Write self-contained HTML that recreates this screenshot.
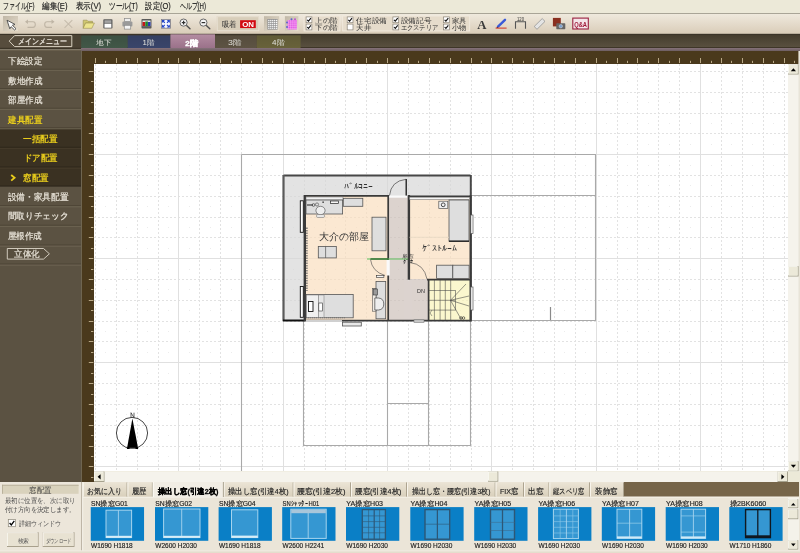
<!DOCTYPE html>
<html><head><meta charset="utf-8">
<style>
html,body{margin:0;padding:0;background:#ece9d8}
body{width:800px;height:553px;overflow:hidden}
svg{display:block;will-change:transform;font-family:"Liberation Sans",sans-serif}
</style></head><body>
<svg width="800" height="553" viewBox="0 0 800 553">
<defs>
<linearGradient id="gTool" x1="0" y1="0" x2="0" y2="1"><stop offset="0" stop-color="#efe9dd"/><stop offset="1" stop-color="#d9ccb8"/></linearGradient>
<linearGradient id="gBand" x1="0" y1="0" x2="0" y2="1"><stop offset="0" stop-color="#463e2f"/><stop offset="1" stop-color="#574d3c"/></linearGradient>
<linearGradient id="gPress" x1="0" y1="0" x2="1" y2="1"><stop offset="0" stop-color="#c0b7a6"/><stop offset="1" stop-color="#e6ddcd"/></linearGradient>
</defs>

<rect x="0" y="0" width="800" height="13" fill="#ece9d8"/><rect x="0" y="13" width="800" height="1" fill="#a9a597"/><text x="2.8" y="9.4" font-size="9.2" fill="#1a1a1a" font-weight="normal" textLength="31.7" lengthAdjust="spacingAndGlyphs" stroke="#1a1a1a" stroke-width="0.15">ファイル(F)</text><text x="42" y="9.4" font-size="9.2" fill="#1a1a1a" font-weight="normal" textLength="25.5" lengthAdjust="spacingAndGlyphs" stroke="#1a1a1a" stroke-width="0.15">編集(E)</text><text x="75.7" y="9.4" font-size="9.2" fill="#1a1a1a" font-weight="normal" textLength="25.5" lengthAdjust="spacingAndGlyphs" stroke="#1a1a1a" stroke-width="0.15">表示(V)</text><text x="109" y="9.4" font-size="9.2" fill="#1a1a1a" font-weight="normal" textLength="28.8" lengthAdjust="spacingAndGlyphs" stroke="#1a1a1a" stroke-width="0.15">ツール(T)</text><text x="145.4" y="9.4" font-size="9.2" fill="#1a1a1a" font-weight="normal" textLength="25.4" lengthAdjust="spacingAndGlyphs" stroke="#1a1a1a" stroke-width="0.15">設定(O)</text><text x="179.8" y="9.4" font-size="9.2" fill="#1a1a1a" font-weight="normal" textLength="26.2" lengthAdjust="spacingAndGlyphs" stroke="#1a1a1a" stroke-width="0.15">ヘルプ(H)</text><rect x="25.5" y="10.6" width="4.6" height="0.8" fill="#333"/><rect x="58.5" y="10.6" width="4.6" height="0.8" fill="#333"/><rect x="92.2" y="10.6" width="4.6" height="0.8" fill="#333"/><rect x="128.8" y="10.6" width="4.6" height="0.8" fill="#333"/><rect x="161.8" y="10.6" width="4.6" height="0.8" fill="#333"/><rect x="197.0" y="10.6" width="4.6" height="0.8" fill="#333"/>
<rect x="0" y="14" width="800" height="20" fill="url(#gTool)"/><rect x="0" y="33" width="800" height="1" fill="#b9ae9c"/><rect x="3" y="16" width="15" height="15" fill="url(#gPress)"/><path d="M7 20.2 L15 24.4 L12.4 25.3 L16 28.7 L14.6 30 L11.1 26.7 L9.8 28.8 Z" fill="#fff" stroke="#4a4a4a" stroke-width="0.9" stroke-linejoin="round"/><path d="M26 21.8 L33 21.8 Q35.3 21.8 35.3 24.6 Q35.3 27.4 33 27.4 L27.5 27.4" fill="none" stroke="#bfb5a5" stroke-width="1.1"/><path d="M25 21.8 L28 19.6 L28 24 Z" fill="#bfb5a5"/><path d="M53.5 21.8 L47 21.8 Q44.7 21.8 44.7 24.6 Q44.7 27.4 47 27.4 L52 27.4" fill="none" stroke="#bfb5a5" stroke-width="1.1"/><path d="M54.5 21.8 L51.5 19.6 L51.5 24 Z" fill="#bfb5a5"/><path d="M64.5 20.2 L72.3 27.8 M72.3 20.2 L64.5 27.8" stroke="#c6bcac" stroke-width="1.1"/><path d="M83.2 20.2 L87 20.2 L88 21.3 L92.5 21.3 L92.5 23 L85.6 23 L83.2 28.2 Z" fill="#cfc770" stroke="#9a9050" stroke-width="0.6"/><path d="M85.6 23 L94.4 23 L91.8 28.3 L83.2 28.3 Z" fill="#ece48e" stroke="#9a9050" stroke-width="0.6"/><rect x="103.3" y="19.3" width="9.2" height="9.2" rx="0.8" fill="#5e5e5e"/><rect x="104.5" y="20.3" width="6.8" height="2.6" fill="#a4a4a4"/><rect x="104.5" y="23.7" width="6.8" height="4" fill="#fff"/><rect x="124.5" y="18.6" width="6" height="3" fill="#eee" stroke="#8a8a8a" stroke-width="0.7"/><rect x="122.4" y="21.6" width="10" height="5" rx="1" fill="#9a9a9a"/><rect x="124.3" y="25.3" width="6.4" height="3.8" fill="#f4f4f4" stroke="#8a8a8a" stroke-width="0.7"/><rect x="141.5" y="19" width="10" height="9.6" rx="0.8" fill="#5a5a5a"/><rect x="142.5" y="20.5" width="8" height="5.6" fill="#e8e8e8"/><rect x="142.5" y="22" width="2.8" height="4" fill="#c01818"/><rect x="145.3" y="21.5" width="2.6" height="4.6" fill="#1a8a2a"/><rect x="147.9" y="22" width="2.6" height="4" fill="#2a3ab0"/><rect x="161" y="19" width="9.8" height="9.6" fill="#7c7c88"/><rect x="161.8" y="19.8" width="8.2" height="8" fill="#f4f6ff"/><path d="M162 20 L165 20 L162 23 Z M169.8 20 L166.8 20 L169.8 23 Z M162 27.6 L165 27.6 L162 24.6 Z M169.8 27.6 L166.8 27.6 L169.8 24.6 Z" fill="#2446c8"/><path d="M162.5 20.5 L164.8 22.8 M169.3 20.5 L167 22.8 M162.5 27.1 L164.8 24.8 M169.3 27.1 L167 24.8" stroke="#2446c8" stroke-width="1.2"/><path d="M186.0 25 L190.0 28.8" stroke="#505050" stroke-width="1.4" stroke-linecap="round"/><circle cx="183.6" cy="22.6" r="3.6" fill="#f4f4f4" stroke="#6a6a6a" stroke-width="1"/><path d="M181.79999999999998 22.6 L185.4 22.6" stroke="#303030" stroke-width="1.2"/><path d="M183.6 20.8 L183.6 24.4" stroke="#303030" stroke-width="1.2"/><path d="M205.8 25 L209.8 28.8" stroke="#505050" stroke-width="1.4" stroke-linecap="round"/><circle cx="203.4" cy="22.6" r="3.6" fill="#f4f4f4" stroke="#6a6a6a" stroke-width="1"/><path d="M201.6 22.6 L205.20000000000002 22.6" stroke="#303030" stroke-width="1.2"/><rect x="216.8" y="16.2" width="42.2" height="14.7" fill="#d8ceba"/><rect x="217.3" y="16.7" width="41.5" height="14" fill="none" stroke="#e8e0d2" stroke-width="1"/><text x="222" y="27" font-size="7.5" fill="#333" font-weight="normal" textLength="14.8" lengthAdjust="spacingAndGlyphs" >吸着</text><rect x="240.1" y="20.2" width="15.7" height="7.9" fill="#d20a12"/><text x="242.2" y="26.9" font-size="8" fill="#fff" font-weight="bold" textLength="11.8" lengthAdjust="spacingAndGlyphs" >ON</text><rect x="264" y="16.2" width="15.2" height="14.7" fill="url(#gPress)"/><rect x="267.4" y="19" width="10.2" height="10.6" fill="#8e8e8e"/><rect x="268.20" y="19.80" width="1.3" height="1.3" fill="#fafafa"/><rect x="268.20" y="21.75" width="1.3" height="1.3" fill="#fafafa"/><rect x="268.20" y="23.70" width="1.3" height="1.3" fill="#fafafa"/><rect x="268.20" y="25.65" width="1.3" height="1.3" fill="#fafafa"/><rect x="268.20" y="27.60" width="1.3" height="1.3" fill="#fafafa"/><rect x="270.15" y="19.80" width="1.3" height="1.3" fill="#fafafa"/><rect x="270.15" y="21.75" width="1.3" height="1.3" fill="#fafafa"/><rect x="270.15" y="23.70" width="1.3" height="1.3" fill="#fafafa"/><rect x="270.15" y="25.65" width="1.3" height="1.3" fill="#fafafa"/><rect x="270.15" y="27.60" width="1.3" height="1.3" fill="#fafafa"/><rect x="272.10" y="19.80" width="1.3" height="1.3" fill="#fafafa"/><rect x="272.10" y="21.75" width="1.3" height="1.3" fill="#fafafa"/><rect x="272.10" y="23.70" width="1.3" height="1.3" fill="#fafafa"/><rect x="272.10" y="25.65" width="1.3" height="1.3" fill="#fafafa"/><rect x="272.10" y="27.60" width="1.3" height="1.3" fill="#fafafa"/><rect x="274.05" y="19.80" width="1.3" height="1.3" fill="#fafafa"/><rect x="274.05" y="21.75" width="1.3" height="1.3" fill="#fafafa"/><rect x="274.05" y="23.70" width="1.3" height="1.3" fill="#fafafa"/><rect x="274.05" y="25.65" width="1.3" height="1.3" fill="#fafafa"/><rect x="274.05" y="27.60" width="1.3" height="1.3" fill="#fafafa"/><rect x="276.00" y="19.80" width="1.3" height="1.3" fill="#fafafa"/><rect x="276.00" y="21.75" width="1.3" height="1.3" fill="#fafafa"/><rect x="276.00" y="23.70" width="1.3" height="1.3" fill="#fafafa"/><rect x="276.00" y="25.65" width="1.3" height="1.3" fill="#fafafa"/><rect x="276.00" y="27.60" width="1.3" height="1.3" fill="#fafafa"/><rect x="284.9" y="16.2" width="13.5" height="14.7" fill="url(#gPress)"/><rect x="287.6" y="20" width="9.2" height="9.4" fill="#e040e0"/><path d="M288.4 20 L288.4 29.4 M287.6 21.0 L296.8 21.0" stroke="#f8c8f8" stroke-width="0.5"/><path d="M290.29999999999995 20 L290.29999999999995 29.4 M287.6 22.9 L296.8 22.9" stroke="#f8c8f8" stroke-width="0.5"/><path d="M292.2 20 L292.2 29.4 M287.6 24.8 L296.8 24.8" stroke="#f8c8f8" stroke-width="0.5"/><path d="M294.09999999999997 20 L294.09999999999997 29.4 M287.6 26.7 L296.8 26.7" stroke="#f8c8f8" stroke-width="0.5"/><path d="M296.0 20 L296.0 29.4 M287.6 28.6 L296.8 28.6" stroke="#f8c8f8" stroke-width="0.5"/><circle cx="287" cy="22.5" r="1" fill="#6060d0"/><circle cx="287" cy="27" r="1" fill="#6060d0"/><circle cx="291.5" cy="19.2" r="1" fill="#6060d0"/><circle cx="295" cy="19.2" r="1" fill="#c050d0"/><rect x="304" y="16" width="36" height="15" fill="#e6dccb" stroke="#f2ece0" stroke-width="0.8"/><rect x="342.7" y="16" width="127" height="15" fill="#e6dccb" stroke="#f2ece0" stroke-width="0.8"/><rect x="306.1" y="16.9" width="5.8" height="5.8" fill="#fff" stroke="#8a8478" stroke-width="0.7"/><path d="M307.20000000000005 19.799999999999997 L308.5 21.2 L310.90000000000003 18.2" fill="none" stroke="#111" stroke-width="1.1"/><rect x="306.1" y="24.1" width="5.8" height="5.8" fill="#fff" stroke="#8a8478" stroke-width="0.7"/><path d="M307.20000000000005 27.0 L308.5 28.400000000000002 L310.90000000000003 25.400000000000002" fill="none" stroke="#111" stroke-width="1.1"/><text x="315.2" y="22.8" font-size="7.3" fill="#333" font-weight="normal" textLength="22.4" lengthAdjust="spacingAndGlyphs" >上の階</text><text x="315.2" y="30" font-size="7.3" fill="#333" font-weight="normal" textLength="22.4" lengthAdjust="spacingAndGlyphs" >下の階</text><rect x="347.2" y="16.9" width="5.8" height="5.8" fill="#fff" stroke="#8a8478" stroke-width="0.7"/><path d="M348.3 19.799999999999997 L349.59999999999997 21.2 L352.0 18.2" fill="none" stroke="#111" stroke-width="1.1"/><rect x="347.2" y="24.1" width="5.8" height="5.8" fill="#fff" stroke="#8a8478" stroke-width="0.7"/><text x="356.2" y="22.8" font-size="7.3" fill="#333" font-weight="normal" textLength="30.8" lengthAdjust="spacingAndGlyphs" >住宅設備</text><text x="356.2" y="30" font-size="7.3" fill="#333" font-weight="normal" textLength="15.0" lengthAdjust="spacingAndGlyphs" >天井</text><rect x="392.9" y="16.9" width="5.8" height="5.8" fill="#fff" stroke="#8a8478" stroke-width="0.7"/><path d="M394.0 19.799999999999997 L395.29999999999995 21.2 L397.7 18.2" fill="none" stroke="#111" stroke-width="1.1"/><rect x="392.9" y="24.1" width="5.8" height="5.8" fill="#fff" stroke="#8a8478" stroke-width="0.7"/><path d="M394.0 27.0 L395.29999999999995 28.400000000000002 L397.7 25.400000000000002" fill="none" stroke="#111" stroke-width="1.1"/><text x="400.7" y="22.8" font-size="7.3" fill="#333" font-weight="normal" textLength="30.8" lengthAdjust="spacingAndGlyphs" >設備記号</text><text x="400.7" y="30" font-size="7.3" fill="#333" font-weight="normal" textLength="37.6" lengthAdjust="spacingAndGlyphs" >エクステリア</text><rect x="443.5" y="16.9" width="5.8" height="5.8" fill="#fff" stroke="#8a8478" stroke-width="0.7"/><path d="M444.6 19.799999999999997 L445.9 21.2 L448.3 18.2" fill="none" stroke="#111" stroke-width="1.1"/><rect x="443.5" y="24.1" width="5.8" height="5.8" fill="#fff" stroke="#8a8478" stroke-width="0.7"/><path d="M444.6 27.0 L445.9 28.400000000000002 L448.3 25.400000000000002" fill="none" stroke="#111" stroke-width="1.1"/><text x="451.9" y="22.8" font-size="7.3" fill="#333" font-weight="normal" textLength="14.5" lengthAdjust="spacingAndGlyphs" >家具</text><text x="451.9" y="30" font-size="7.3" fill="#333" font-weight="normal" textLength="14.5" lengthAdjust="spacingAndGlyphs" >小物</text><text x="477.2" y="29.2" font-family="Liberation Serif" font-size="13" font-weight="bold" fill="#3a3a3a" textLength="9.2" lengthAdjust="spacingAndGlyphs">A</text><path d="M505 19.8 L498 26.6" stroke="#3a5ad8" stroke-width="2.4" stroke-linecap="round"/><path d="M497.8 26.9 L496.8 28" stroke="#222" stroke-width="1"/><path d="M495.6 28.1 L506.6 28.1" stroke="#d03020" stroke-width="1"/><path d="M515.5 28.8 L515.5 21.8 L525.5 21.8 L525.5 28.8" fill="none" stroke="#555" stroke-width="1.1"/><text x="517" y="21" font-size="4.5" fill="#333" textLength="7" lengthAdjust="spacingAndGlyphs">120</text><path d="M534.2 26.5 L542.2 18.6 L545 21.4 L537 29.3 Z" fill="#e4e4e4" stroke="#8a8a8a" stroke-width="0.7"/><rect x="552.9" y="17.9" width="7.9" height="8.5" fill="#8a3020"/><rect x="556.3" y="23.3" width="9" height="5.9" rx="0.6" fill="#666"/><circle cx="560.8" cy="26.2" r="1.7" fill="#7aa0d0" stroke="#ddd" stroke-width="0.5"/><rect x="572.8" y="18.1" width="15.5" height="10.9" fill="#f4e4e8" stroke="#9a2040" stroke-width="1.1"/><text x="574.2" y="27.2" font-size="8" fill="#a01838" font-weight="bold" textLength="12.8" lengthAdjust="spacingAndGlyphs" >Q&amp;A</text>
<defs><linearGradient id="gB2" x1="0" y1="0" x2="0" y2="1"><stop offset="0" stop-color="#433b2c"/><stop offset="1" stop-color="#5b5241"/></linearGradient></defs><rect x="0" y="34" width="800" height="14.5" fill="url(#gB2)"/><rect x="0" y="34" width="800" height="1" fill="#3b3428"/><rect x="0" y="35" width="72" height="13" fill="#574d3d"/><rect x="72" y="35" width="9" height="13" fill="#4b4334"/><rect x="81" y="47" width="719" height="1.2" fill="#3e3628"/><path d="M14.6 35.6 L71.8 35.6 L71.8 46.6 L14.6 46.6 L9.2 41.1 Z" fill="#544a3a" stroke="#d8d0c0" stroke-width="1"/><text x="18" y="44.1" font-size="7.8" fill="#ebe6dc" font-weight="normal" textLength="49.0" lengthAdjust="spacingAndGlyphs" stroke="#ebe6dc" stroke-width="0.25">メインメニュー</text><defs><linearGradient id="gTg" x1="0" y1="0" x2="0" y2="1"><stop offset="0" stop-color="#000" stop-opacity="0.08"/><stop offset="1" stop-color="#000" stop-opacity="0"/></linearGradient></defs><rect x="81.2" y="35.4" width="46.5" height="12.6" fill="#415747"/><rect x="81.2" y="35.4" width="46.5" height="12.6" fill="url(#gTg)"/><text x="96.2" y="45.3" font-size="7.4" fill="#e2e2dc" font-weight="normal" textLength="15.2" lengthAdjust="spacingAndGlyphs" >地下</text><rect x="127.7" y="35.4" width="42.7" height="12.6" fill="#39456a"/><rect x="127.7" y="35.4" width="42.7" height="12.6" fill="url(#gTg)"/><text x="142.4" y="45.3" font-size="7.4" fill="#e2e2dc" font-weight="normal" textLength="11.8" lengthAdjust="spacingAndGlyphs" >1階</text><rect x="215" y="35.4" width="41.80000000000001" height="12.6" fill="#5d5343"/><rect x="215" y="35.4" width="41.80000000000001" height="12.6" fill="url(#gTg)"/><text x="228" y="45.3" font-size="7.4" fill="#e2e2dc" font-weight="normal" textLength="13.4" lengthAdjust="spacingAndGlyphs" >3階</text><rect x="256.8" y="35.4" width="43.80000000000001" height="12.6" fill="#68623a"/><rect x="256.8" y="35.4" width="43.80000000000001" height="12.6" fill="url(#gTg)"/><text x="272" y="45.3" font-size="7.4" fill="#e2e2dc" font-weight="normal" textLength="12.2" lengthAdjust="spacingAndGlyphs" >4階</text><defs><linearGradient id="gT2" x1="0" y1="0" x2="0" y2="1"><stop offset="0" stop-color="#b48ca2"/><stop offset="1" stop-color="#9a7189"/></linearGradient></defs><rect x="170.4" y="34.3" width="44.6" height="14" fill="url(#gT2)"/><text x="185.2" y="45.5" font-size="7.8" fill="#ffffff" font-weight="bold" textLength="12.8" lengthAdjust="spacingAndGlyphs" stroke="#fff" stroke-width="0.35">2階</text><rect x="0" y="47.8" width="81" height="1.6" fill="#3d3628"/><rect x="0" y="49.4" width="81" height="1.6" fill="#685e4c"/><defs><linearGradient id="gSt" x1="0" y1="0" x2="0" y2="1"><stop offset="0" stop-color="#85727a"/><stop offset="1" stop-color="#6e5e62"/></linearGradient></defs><rect x="81" y="48" width="719" height="3" fill="url(#gSt)"/>
<rect x="0" y="51" width="81" height="431" fill="#5b5242"/><rect x="0" y="128.5" width="81" height="57.5" fill="#3a3122"/><rect x="0" y="68.8" width="81" height="1" fill="#4a4234"/><rect x="0" y="69.8" width="81" height="1" fill="#6e6553"/><rect x="0" y="88.2" width="81" height="1" fill="#4a4234"/><rect x="0" y="89.2" width="81" height="1" fill="#6e6553"/><rect x="0" y="107.8" width="81" height="1" fill="#4a4234"/><rect x="0" y="108.8" width="81" height="1" fill="#6e6553"/><rect x="0" y="127.3" width="81" height="1" fill="#4a4234"/><rect x="0" y="128.3" width="81" height="1" fill="#6e6553"/><rect x="0" y="146.8" width="81" height="1" fill="#2c2519"/><rect x="0" y="147.8" width="81" height="1" fill="#463c2c"/><rect x="0" y="166.6" width="81" height="1" fill="#2c2519"/><rect x="0" y="167.6" width="81" height="1" fill="#463c2c"/><rect x="0" y="185.6" width="81" height="1" fill="#2c2519"/><rect x="0" y="205.3" width="81" height="1" fill="#4a4234"/><rect x="0" y="206.3" width="81" height="1" fill="#6e6553"/><rect x="0" y="224.8" width="81" height="1" fill="#4a4234"/><rect x="0" y="225.8" width="81" height="1" fill="#6e6553"/><rect x="0" y="244.6" width="81" height="1" fill="#4a4234"/><rect x="0" y="245.6" width="81" height="1" fill="#6e6553"/><rect x="0" y="263.6" width="81" height="1" fill="#4a4234"/><rect x="0" y="264.6" width="81" height="1" fill="#6e6553"/><text x="8" y="64.1" font-size="8.6" fill="#e8e3d8" font-weight="normal" textLength="34.0" lengthAdjust="spacingAndGlyphs" stroke="#e8e3d8" stroke-width="0.2">下絵設定</text><text x="8" y="83.9" font-size="8.6" fill="#e8e3d8" font-weight="normal" textLength="34.0" lengthAdjust="spacingAndGlyphs" stroke="#e8e3d8" stroke-width="0.2">敷地作成</text><text x="8" y="103.2" font-size="8.6" fill="#e8e3d8" font-weight="normal" textLength="34.0" lengthAdjust="spacingAndGlyphs" stroke="#e8e3d8" stroke-width="0.2">部屋作成</text><text x="8" y="122.6" font-size="8.6" fill="#e8cc1c" font-weight="bold" textLength="34.0" lengthAdjust="spacingAndGlyphs" >建具配置</text><text x="23" y="141.9" font-size="8.6" fill="#e8cc1c" font-weight="bold" textLength="34.5" lengthAdjust="spacingAndGlyphs" >一括配置</text><text x="24" y="161.2" font-size="8.6" fill="#e8cc1c" font-weight="bold" textLength="33.5" lengthAdjust="spacingAndGlyphs" >ドア配置</text><path d="M11.2 175 L14.6 177.8 L11.2 180.6" fill="none" stroke="#e8cc1c" stroke-width="1.8"/><text x="23" y="181.0" font-size="8.6" fill="#e8cc1c" font-weight="bold" textLength="25.5" lengthAdjust="spacingAndGlyphs" >窓配置</text><text x="7.7" y="199.7" font-size="8.6" fill="#e8e3d8" font-weight="normal" textLength="60.8" lengthAdjust="spacingAndGlyphs" stroke="#e8e3d8" stroke-width="0.2">設備・家具配置</text><text x="7.7" y="219.0" font-size="8.6" fill="#e8e3d8" font-weight="normal" textLength="60.8" lengthAdjust="spacingAndGlyphs" stroke="#e8e3d8" stroke-width="0.2">間取りチェック</text><text x="7.7" y="239.0" font-size="8.6" fill="#e8e3d8" font-weight="normal" textLength="34.3" lengthAdjust="spacingAndGlyphs" stroke="#e8e3d8" stroke-width="0.2">屋根作成</text><path d="M7.3 248.5 L43.5 248.5 L49.4 253.8 L43.5 259.1 L7.3 259.1 Z" fill="#574e3e" stroke="#ddd6c8" stroke-width="0.9"/><text x="14" y="257.0" font-size="8.6" fill="#e8e3d8" font-weight="normal" textLength="25.6" lengthAdjust="spacingAndGlyphs" stroke="#e8e3d8" stroke-width="0.2">立体化</text>
<rect x="81" y="51" width="719" height="13" fill="#4a391c"/><rect x="81" y="51" width="13" height="431" fill="#4a391c"/><rect x="81" y="51" width="1" height="431" fill="#6f6550"/><rect x="798" y="51" width="2" height="13" fill="#6b5a40"/><path d="M95.5 58 L95.5 63 M105.5 60.8 L105.5 63 M116.5 58 L116.5 63 M126.5 60.8 L126.5 63 M137.5 58 L137.5 63 M147.5 60.8 L147.5 63 M158.5 58 L158.5 63 M168.5 60.8 L168.5 63 M178.5 58 L178.5 63 M189.5 60.8 L189.5 63 M199.5 58 L199.5 63 M210.5 60.8 L210.5 63 M220.5 58 L220.5 63 M231.5 60.8 L231.5 63 M241.5 58 L241.5 63 M251.5 60.8 L251.5 63 M262.5 58 L262.5 63 M272.5 60.8 L272.5 63 M283.5 58 L283.5 63 M293.5 60.8 L293.5 63 M304.5 58 L304.5 63 M314.5 60.8 L314.5 63 M325.5 58 L325.5 63 M335.5 60.8 L335.5 63 M345.5 58 L345.5 63 M356.5 60.8 L356.5 63 M366.5 58 L366.5 63 M377.5 60.8 L377.5 63 M387.5 58 L387.5 63 M398.5 60.8 L398.5 63 M408.5 58 L408.5 63 M418.5 60.8 L418.5 63 M429.5 58 L429.5 63 M439.5 60.8 L439.5 63 M450.5 58 L450.5 63 M460.5 60.8 L460.5 63 M471.5 58 L471.5 63 M481.5 60.8 L481.5 63 M491.5 58 L491.5 63 M502.5 60.8 L502.5 63 M512.5 58 L512.5 63 M523.5 60.8 L523.5 63 M533.5 58 L533.5 63 M544.5 60.8 L544.5 63 M554.5 58 L554.5 63 M564.5 60.8 L564.5 63 M575.5 58 L575.5 63 M585.5 60.8 L585.5 63 M596.5 58 L596.5 63 M606.5 60.8 L606.5 63 M617.5 58 L617.5 63 M627.5 60.8 L627.5 63 M637.5 58 L637.5 63 M648.5 60.8 L648.5 63 M658.5 58 L658.5 63 M669.5 60.8 L669.5 63 M679.5 58 L679.5 63 M690.5 60.8 L690.5 63 M700.5 58 L700.5 63 M711.5 60.8 L711.5 63 M721.5 58 L721.5 63 M731.5 60.8 L731.5 63 M742.5 58 L742.5 63 M752.5 60.8 L752.5 63 M763.5 58 L763.5 63 M773.5 60.8 L773.5 63 M784.5 58 L784.5 63 M794.5 60.8 L794.5 63 M88.8 71.5 L93.4 71.5 M91 81.5 L93.4 81.5 M88.8 92.5 L93.4 92.5 M91 102.5 L93.4 102.5 M88.8 113.5 L93.4 113.5 M91 123.5 L93.4 123.5 M88.8 133.5 L93.4 133.5 M91 144.5 L93.4 144.5 M88.8 154.5 L93.4 154.5 M91 165.5 L93.4 165.5 M88.8 175.5 L93.4 175.5 M91 185.5 L93.4 185.5 M88.8 196.5 L93.4 196.5 M91 206.5 L93.4 206.5 M88.8 217.5 L93.4 217.5 M91 227.5 L93.4 227.5 M88.8 237.5 L93.4 237.5 M91 248.5 L93.4 248.5 M88.8 258.5 L93.4 258.5 M91 269.5 L93.4 269.5 M88.8 279.5 L93.4 279.5 M91 289.5 L93.4 289.5 M88.8 300.5 L93.4 300.5 M91 310.5 L93.4 310.5 M88.8 321.5 L93.4 321.5 M91 331.5 L93.4 331.5 M88.8 341.5 L93.4 341.5 M91 352.5 L93.4 352.5 M88.8 362.5 L93.4 362.5 M91 373.5 L93.4 373.5 M88.8 383.5 L93.4 383.5 M91 394.5 L93.4 394.5 M88.8 404.5 L93.4 404.5 M91 414.5 L93.4 414.5 M88.8 425.5 L93.4 425.5 M91 435.5 L93.4 435.5 M88.8 446.5 L93.4 446.5 M91 456.5 L93.4 456.5 M88.8 466.5 L93.4 466.5 M91 477.5 L93.4 477.5 " stroke="#b9a886" stroke-width="1"/>
<rect x="94" y="64" width="694" height="407" fill="#ffffff"/><svg x="94" y="64" width="694" height="407" viewBox="94 64 694 407"><path d="M95.5 64 L95.5 471 M116.5 64 L116.5 471 M137.5 64 L137.5 471 M158.5 64 L158.5 471 M199.5 64 L199.5 471 M220.5 64 L220.5 471 M241.5 64 L241.5 471 M262.5 64 L262.5 471 M304.5 64 L304.5 471 M325.5 64 L325.5 471 M345.5 64 L345.5 471 M366.5 64 L366.5 471 M408.5 64 L408.5 471 M429.5 64 L429.5 471 M450.5 64 L450.5 471 M471.5 64 L471.5 471 M512.5 64 L512.5 471 M533.5 64 L533.5 471 M554.5 64 L554.5 471 M575.5 64 L575.5 471 M617.5 64 L617.5 471 M637.5 64 L637.5 471 M658.5 64 L658.5 471 M679.5 64 L679.5 471 M721.5 64 L721.5 471 M742.5 64 L742.5 471 M763.5 64 L763.5 471 M784.5 64 L784.5 471 M94 71.5 L788 71.5 M94 92.5 L788 92.5 M94 113.5 L788 113.5 M94 133.5 L788 133.5 M94 175.5 L788 175.5 M94 196.5 L788 196.5 M94 217.5 L788 217.5 M94 237.5 L788 237.5 M94 279.5 L788 279.5 M94 300.5 L788 300.5 M94 321.5 L788 321.5 M94 341.5 L788 341.5 M94 383.5 L788 383.5 M94 404.5 L788 404.5 M94 425.5 L788 425.5 M94 446.5 L788 446.5 " stroke="#e2e2e2" stroke-width="1" stroke-dasharray="2 2" fill="none"/><path d="M178.5 64 L178.5 471 M283.5 64 L283.5 471 M387.5 64 L387.5 471 M491.5 64 L491.5 471 M596.5 64 L596.5 471 M700.5 64 L700.5 471 M94 154.5 L788 154.5 M94 258.5 L788 258.5 M94 362.5 L788 362.5 M94 466.5 L788 466.5 " stroke="#e0e0e0" stroke-width="1" fill="none"/><path d="M105 81h1v1h-1zM105 102h1v1h-1zM105 123h1v1h-1zM105 144h1v1h-1zM105 165h1v1h-1zM105 185h1v1h-1zM105 206h1v1h-1zM105 227h1v1h-1zM105 248h1v1h-1zM105 269h1v1h-1zM105 289h1v1h-1zM105 310h1v1h-1zM105 331h1v1h-1zM105 352h1v1h-1zM105 373h1v1h-1zM105 394h1v1h-1zM105 414h1v1h-1zM105 435h1v1h-1zM105 456h1v1h-1zM126 81h1v1h-1zM126 102h1v1h-1zM126 123h1v1h-1zM126 144h1v1h-1zM126 165h1v1h-1zM126 185h1v1h-1zM126 206h1v1h-1zM126 227h1v1h-1zM126 248h1v1h-1zM126 269h1v1h-1zM126 289h1v1h-1zM126 310h1v1h-1zM126 331h1v1h-1zM126 352h1v1h-1zM126 373h1v1h-1zM126 394h1v1h-1zM126 414h1v1h-1zM126 435h1v1h-1zM126 456h1v1h-1zM147 81h1v1h-1zM147 102h1v1h-1zM147 123h1v1h-1zM147 144h1v1h-1zM147 165h1v1h-1zM147 185h1v1h-1zM147 206h1v1h-1zM147 227h1v1h-1zM147 248h1v1h-1zM147 269h1v1h-1zM147 289h1v1h-1zM147 310h1v1h-1zM147 331h1v1h-1zM147 352h1v1h-1zM147 373h1v1h-1zM147 394h1v1h-1zM147 414h1v1h-1zM147 435h1v1h-1zM147 456h1v1h-1zM168 81h1v1h-1zM168 102h1v1h-1zM168 123h1v1h-1zM168 144h1v1h-1zM168 165h1v1h-1zM168 185h1v1h-1zM168 206h1v1h-1zM168 227h1v1h-1zM168 248h1v1h-1zM168 269h1v1h-1zM168 289h1v1h-1zM168 310h1v1h-1zM168 331h1v1h-1zM168 352h1v1h-1zM168 373h1v1h-1zM168 394h1v1h-1zM168 414h1v1h-1zM168 435h1v1h-1zM168 456h1v1h-1zM189 81h1v1h-1zM189 102h1v1h-1zM189 123h1v1h-1zM189 144h1v1h-1zM189 165h1v1h-1zM189 185h1v1h-1zM189 206h1v1h-1zM189 227h1v1h-1zM189 248h1v1h-1zM189 269h1v1h-1zM189 289h1v1h-1zM189 310h1v1h-1zM189 331h1v1h-1zM189 352h1v1h-1zM189 373h1v1h-1zM189 394h1v1h-1zM189 414h1v1h-1zM189 435h1v1h-1zM189 456h1v1h-1zM210 81h1v1h-1zM210 102h1v1h-1zM210 123h1v1h-1zM210 144h1v1h-1zM210 165h1v1h-1zM210 185h1v1h-1zM210 206h1v1h-1zM210 227h1v1h-1zM210 248h1v1h-1zM210 269h1v1h-1zM210 289h1v1h-1zM210 310h1v1h-1zM210 331h1v1h-1zM210 352h1v1h-1zM210 373h1v1h-1zM210 394h1v1h-1zM210 414h1v1h-1zM210 435h1v1h-1zM210 456h1v1h-1zM231 81h1v1h-1zM231 102h1v1h-1zM231 123h1v1h-1zM231 144h1v1h-1zM231 165h1v1h-1zM231 185h1v1h-1zM231 206h1v1h-1zM231 227h1v1h-1zM231 248h1v1h-1zM231 269h1v1h-1zM231 289h1v1h-1zM231 310h1v1h-1zM231 331h1v1h-1zM231 352h1v1h-1zM231 373h1v1h-1zM231 394h1v1h-1zM231 414h1v1h-1zM231 435h1v1h-1zM231 456h1v1h-1zM251 81h1v1h-1zM251 102h1v1h-1zM251 123h1v1h-1zM251 144h1v1h-1zM251 165h1v1h-1zM251 185h1v1h-1zM251 206h1v1h-1zM251 227h1v1h-1zM251 248h1v1h-1zM251 269h1v1h-1zM251 289h1v1h-1zM251 310h1v1h-1zM251 331h1v1h-1zM251 352h1v1h-1zM251 373h1v1h-1zM251 394h1v1h-1zM251 414h1v1h-1zM251 435h1v1h-1zM251 456h1v1h-1zM272 81h1v1h-1zM272 102h1v1h-1zM272 123h1v1h-1zM272 144h1v1h-1zM272 165h1v1h-1zM272 185h1v1h-1zM272 206h1v1h-1zM272 227h1v1h-1zM272 248h1v1h-1zM272 269h1v1h-1zM272 289h1v1h-1zM272 310h1v1h-1zM272 331h1v1h-1zM272 352h1v1h-1zM272 373h1v1h-1zM272 394h1v1h-1zM272 414h1v1h-1zM272 435h1v1h-1zM272 456h1v1h-1zM293 81h1v1h-1zM293 102h1v1h-1zM293 123h1v1h-1zM293 144h1v1h-1zM293 165h1v1h-1zM293 185h1v1h-1zM293 206h1v1h-1zM293 227h1v1h-1zM293 248h1v1h-1zM293 269h1v1h-1zM293 289h1v1h-1zM293 310h1v1h-1zM293 331h1v1h-1zM293 352h1v1h-1zM293 373h1v1h-1zM293 394h1v1h-1zM293 414h1v1h-1zM293 435h1v1h-1zM293 456h1v1h-1zM314 81h1v1h-1zM314 102h1v1h-1zM314 123h1v1h-1zM314 144h1v1h-1zM314 165h1v1h-1zM314 185h1v1h-1zM314 206h1v1h-1zM314 227h1v1h-1zM314 248h1v1h-1zM314 269h1v1h-1zM314 289h1v1h-1zM314 310h1v1h-1zM314 331h1v1h-1zM314 352h1v1h-1zM314 373h1v1h-1zM314 394h1v1h-1zM314 414h1v1h-1zM314 435h1v1h-1zM314 456h1v1h-1zM335 81h1v1h-1zM335 102h1v1h-1zM335 123h1v1h-1zM335 144h1v1h-1zM335 165h1v1h-1zM335 185h1v1h-1zM335 206h1v1h-1zM335 227h1v1h-1zM335 248h1v1h-1zM335 269h1v1h-1zM335 289h1v1h-1zM335 310h1v1h-1zM335 331h1v1h-1zM335 352h1v1h-1zM335 373h1v1h-1zM335 394h1v1h-1zM335 414h1v1h-1zM335 435h1v1h-1zM335 456h1v1h-1zM356 81h1v1h-1zM356 102h1v1h-1zM356 123h1v1h-1zM356 144h1v1h-1zM356 165h1v1h-1zM356 185h1v1h-1zM356 206h1v1h-1zM356 227h1v1h-1zM356 248h1v1h-1zM356 269h1v1h-1zM356 289h1v1h-1zM356 310h1v1h-1zM356 331h1v1h-1zM356 352h1v1h-1zM356 373h1v1h-1zM356 394h1v1h-1zM356 414h1v1h-1zM356 435h1v1h-1zM356 456h1v1h-1zM377 81h1v1h-1zM377 102h1v1h-1zM377 123h1v1h-1zM377 144h1v1h-1zM377 165h1v1h-1zM377 185h1v1h-1zM377 206h1v1h-1zM377 227h1v1h-1zM377 248h1v1h-1zM377 269h1v1h-1zM377 289h1v1h-1zM377 310h1v1h-1zM377 331h1v1h-1zM377 352h1v1h-1zM377 373h1v1h-1zM377 394h1v1h-1zM377 414h1v1h-1zM377 435h1v1h-1zM377 456h1v1h-1zM398 81h1v1h-1zM398 102h1v1h-1zM398 123h1v1h-1zM398 144h1v1h-1zM398 165h1v1h-1zM398 185h1v1h-1zM398 206h1v1h-1zM398 227h1v1h-1zM398 248h1v1h-1zM398 269h1v1h-1zM398 289h1v1h-1zM398 310h1v1h-1zM398 331h1v1h-1zM398 352h1v1h-1zM398 373h1v1h-1zM398 394h1v1h-1zM398 414h1v1h-1zM398 435h1v1h-1zM398 456h1v1h-1zM418 81h1v1h-1zM418 102h1v1h-1zM418 123h1v1h-1zM418 144h1v1h-1zM418 165h1v1h-1zM418 185h1v1h-1zM418 206h1v1h-1zM418 227h1v1h-1zM418 248h1v1h-1zM418 269h1v1h-1zM418 289h1v1h-1zM418 310h1v1h-1zM418 331h1v1h-1zM418 352h1v1h-1zM418 373h1v1h-1zM418 394h1v1h-1zM418 414h1v1h-1zM418 435h1v1h-1zM418 456h1v1h-1zM439 81h1v1h-1zM439 102h1v1h-1zM439 123h1v1h-1zM439 144h1v1h-1zM439 165h1v1h-1zM439 185h1v1h-1zM439 206h1v1h-1zM439 227h1v1h-1zM439 248h1v1h-1zM439 269h1v1h-1zM439 289h1v1h-1zM439 310h1v1h-1zM439 331h1v1h-1zM439 352h1v1h-1zM439 373h1v1h-1zM439 394h1v1h-1zM439 414h1v1h-1zM439 435h1v1h-1zM439 456h1v1h-1zM460 81h1v1h-1zM460 102h1v1h-1zM460 123h1v1h-1zM460 144h1v1h-1zM460 165h1v1h-1zM460 185h1v1h-1zM460 206h1v1h-1zM460 227h1v1h-1zM460 248h1v1h-1zM460 269h1v1h-1zM460 289h1v1h-1zM460 310h1v1h-1zM460 331h1v1h-1zM460 352h1v1h-1zM460 373h1v1h-1zM460 394h1v1h-1zM460 414h1v1h-1zM460 435h1v1h-1zM460 456h1v1h-1zM481 81h1v1h-1zM481 102h1v1h-1zM481 123h1v1h-1zM481 144h1v1h-1zM481 165h1v1h-1zM481 185h1v1h-1zM481 206h1v1h-1zM481 227h1v1h-1zM481 248h1v1h-1zM481 269h1v1h-1zM481 289h1v1h-1zM481 310h1v1h-1zM481 331h1v1h-1zM481 352h1v1h-1zM481 373h1v1h-1zM481 394h1v1h-1zM481 414h1v1h-1zM481 435h1v1h-1zM481 456h1v1h-1zM502 81h1v1h-1zM502 102h1v1h-1zM502 123h1v1h-1zM502 144h1v1h-1zM502 165h1v1h-1zM502 185h1v1h-1zM502 206h1v1h-1zM502 227h1v1h-1zM502 248h1v1h-1zM502 269h1v1h-1zM502 289h1v1h-1zM502 310h1v1h-1zM502 331h1v1h-1zM502 352h1v1h-1zM502 373h1v1h-1zM502 394h1v1h-1zM502 414h1v1h-1zM502 435h1v1h-1zM502 456h1v1h-1zM523 81h1v1h-1zM523 102h1v1h-1zM523 123h1v1h-1zM523 144h1v1h-1zM523 165h1v1h-1zM523 185h1v1h-1zM523 206h1v1h-1zM523 227h1v1h-1zM523 248h1v1h-1zM523 269h1v1h-1zM523 289h1v1h-1zM523 310h1v1h-1zM523 331h1v1h-1zM523 352h1v1h-1zM523 373h1v1h-1zM523 394h1v1h-1zM523 414h1v1h-1zM523 435h1v1h-1zM523 456h1v1h-1zM544 81h1v1h-1zM544 102h1v1h-1zM544 123h1v1h-1zM544 144h1v1h-1zM544 165h1v1h-1zM544 185h1v1h-1zM544 206h1v1h-1zM544 227h1v1h-1zM544 248h1v1h-1zM544 269h1v1h-1zM544 289h1v1h-1zM544 310h1v1h-1zM544 331h1v1h-1zM544 352h1v1h-1zM544 373h1v1h-1zM544 394h1v1h-1zM544 414h1v1h-1zM544 435h1v1h-1zM544 456h1v1h-1zM564 81h1v1h-1zM564 102h1v1h-1zM564 123h1v1h-1zM564 144h1v1h-1zM564 165h1v1h-1zM564 185h1v1h-1zM564 206h1v1h-1zM564 227h1v1h-1zM564 248h1v1h-1zM564 269h1v1h-1zM564 289h1v1h-1zM564 310h1v1h-1zM564 331h1v1h-1zM564 352h1v1h-1zM564 373h1v1h-1zM564 394h1v1h-1zM564 414h1v1h-1zM564 435h1v1h-1zM564 456h1v1h-1zM585 81h1v1h-1zM585 102h1v1h-1zM585 123h1v1h-1zM585 144h1v1h-1zM585 165h1v1h-1zM585 185h1v1h-1zM585 206h1v1h-1zM585 227h1v1h-1zM585 248h1v1h-1zM585 269h1v1h-1zM585 289h1v1h-1zM585 310h1v1h-1zM585 331h1v1h-1zM585 352h1v1h-1zM585 373h1v1h-1zM585 394h1v1h-1zM585 414h1v1h-1zM585 435h1v1h-1zM585 456h1v1h-1zM606 81h1v1h-1zM606 102h1v1h-1zM606 123h1v1h-1zM606 144h1v1h-1zM606 165h1v1h-1zM606 185h1v1h-1zM606 206h1v1h-1zM606 227h1v1h-1zM606 248h1v1h-1zM606 269h1v1h-1zM606 289h1v1h-1zM606 310h1v1h-1zM606 331h1v1h-1zM606 352h1v1h-1zM606 373h1v1h-1zM606 394h1v1h-1zM606 414h1v1h-1zM606 435h1v1h-1zM606 456h1v1h-1zM627 81h1v1h-1zM627 102h1v1h-1zM627 123h1v1h-1zM627 144h1v1h-1zM627 165h1v1h-1zM627 185h1v1h-1zM627 206h1v1h-1zM627 227h1v1h-1zM627 248h1v1h-1zM627 269h1v1h-1zM627 289h1v1h-1zM627 310h1v1h-1zM627 331h1v1h-1zM627 352h1v1h-1zM627 373h1v1h-1zM627 394h1v1h-1zM627 414h1v1h-1zM627 435h1v1h-1zM627 456h1v1h-1zM648 81h1v1h-1zM648 102h1v1h-1zM648 123h1v1h-1zM648 144h1v1h-1zM648 165h1v1h-1zM648 185h1v1h-1zM648 206h1v1h-1zM648 227h1v1h-1zM648 248h1v1h-1zM648 269h1v1h-1zM648 289h1v1h-1zM648 310h1v1h-1zM648 331h1v1h-1zM648 352h1v1h-1zM648 373h1v1h-1zM648 394h1v1h-1zM648 414h1v1h-1zM648 435h1v1h-1zM648 456h1v1h-1zM669 81h1v1h-1zM669 102h1v1h-1zM669 123h1v1h-1zM669 144h1v1h-1zM669 165h1v1h-1zM669 185h1v1h-1zM669 206h1v1h-1zM669 227h1v1h-1zM669 248h1v1h-1zM669 269h1v1h-1zM669 289h1v1h-1zM669 310h1v1h-1zM669 331h1v1h-1zM669 352h1v1h-1zM669 373h1v1h-1zM669 394h1v1h-1zM669 414h1v1h-1zM669 435h1v1h-1zM669 456h1v1h-1zM690 81h1v1h-1zM690 102h1v1h-1zM690 123h1v1h-1zM690 144h1v1h-1zM690 165h1v1h-1zM690 185h1v1h-1zM690 206h1v1h-1zM690 227h1v1h-1zM690 248h1v1h-1zM690 269h1v1h-1zM690 289h1v1h-1zM690 310h1v1h-1zM690 331h1v1h-1zM690 352h1v1h-1zM690 373h1v1h-1zM690 394h1v1h-1zM690 414h1v1h-1zM690 435h1v1h-1zM690 456h1v1h-1zM711 81h1v1h-1zM711 102h1v1h-1zM711 123h1v1h-1zM711 144h1v1h-1zM711 165h1v1h-1zM711 185h1v1h-1zM711 206h1v1h-1zM711 227h1v1h-1zM711 248h1v1h-1zM711 269h1v1h-1zM711 289h1v1h-1zM711 310h1v1h-1zM711 331h1v1h-1zM711 352h1v1h-1zM711 373h1v1h-1zM711 394h1v1h-1zM711 414h1v1h-1zM711 435h1v1h-1zM711 456h1v1h-1zM731 81h1v1h-1zM731 102h1v1h-1zM731 123h1v1h-1zM731 144h1v1h-1zM731 165h1v1h-1zM731 185h1v1h-1zM731 206h1v1h-1zM731 227h1v1h-1zM731 248h1v1h-1zM731 269h1v1h-1zM731 289h1v1h-1zM731 310h1v1h-1zM731 331h1v1h-1zM731 352h1v1h-1zM731 373h1v1h-1zM731 394h1v1h-1zM731 414h1v1h-1zM731 435h1v1h-1zM731 456h1v1h-1zM752 81h1v1h-1zM752 102h1v1h-1zM752 123h1v1h-1zM752 144h1v1h-1zM752 165h1v1h-1zM752 185h1v1h-1zM752 206h1v1h-1zM752 227h1v1h-1zM752 248h1v1h-1zM752 269h1v1h-1zM752 289h1v1h-1zM752 310h1v1h-1zM752 331h1v1h-1zM752 352h1v1h-1zM752 373h1v1h-1zM752 394h1v1h-1zM752 414h1v1h-1zM752 435h1v1h-1zM752 456h1v1h-1zM773 81h1v1h-1zM773 102h1v1h-1zM773 123h1v1h-1zM773 144h1v1h-1zM773 165h1v1h-1zM773 185h1v1h-1zM773 206h1v1h-1zM773 227h1v1h-1zM773 248h1v1h-1zM773 269h1v1h-1zM773 289h1v1h-1zM773 310h1v1h-1zM773 331h1v1h-1zM773 352h1v1h-1zM773 373h1v1h-1zM773 394h1v1h-1zM773 414h1v1h-1zM773 435h1v1h-1zM773 456h1v1h-1z" fill="#ececec"/></svg><g opacity="0.7"><path d="M283 175.5 L471 175.5 L471 196 L305 196 L305 320.5 L283 320.5 Z" fill="#d7d7d7"/><rect x="305" y="196" width="83" height="124.5" fill="#f9debf"/><rect x="388" y="196" width="20" height="124.5" fill="#cdc0ba"/><rect x="409" y="196" width="61" height="83" fill="#f9debf"/><rect x="409" y="279" width="20" height="41.5" fill="#cdc0ba"/><rect x="429" y="280" width="41" height="40" fill="#f9f4ba"/></g>
<path d="M241.5 154.5 L595.5 154.5 L595.5 320.5 L471 320.5 M241.5 154.5 L241.5 471 M471 195.5 L595.5 195.5 M303.5 321 L303.5 445.5 L470.5 445.5 L470.5 321 M387.5 321 L387.5 445.5 M428.5 321 L428.5 445.5 M387.5 403.5 L428.5 403.5" stroke="#a9a9a9" stroke-width="1.1" fill="none"/><path d="M550.5 307 L550.5 320" stroke="#8a8a8a" stroke-width="1.2"/><rect x="404" y="280.5" width="8" height="39.5" fill="#dcd3cf"/><rect x="389" y="195.5" width="18.5" height="2.2" fill="#fafafa"/><path d="M283.5 175.5 L470.5 175.5" stroke="#474747" stroke-width="2"/><path d="M283.5 175 L283.5 321" stroke="#5a5a5a" stroke-width="2.2"/><path d="M470.8 175 L470.8 196" stroke="#474747" stroke-width="2"/><path d="M283 320.5 L305 320.5" stroke="#111" stroke-width="2"/><path d="M304.3 195.8 L388 195.8 M408.5 196.3 L470.5 196.3 M305 320.7 L470.5 320.7 M427 279.6 L470.5 279.6 M428.6 279.2 L428.6 320.5" stroke="#3a3a3a" stroke-width="1.7" fill="none"/><path d="M304.8 195 L304.8 321 M408.9 195 L408.9 279.8 M470.7 195.5 L470.7 321.5" stroke="#3a3a3a" stroke-width="2.4" fill="none"/><path d="M388.2 195 L388.2 321" stroke="#3a3a3a" stroke-width="1.7" fill="none"/><rect x="386.6" y="260" width="3.2" height="15.5" fill="#fafafa"/><rect x="409.5" y="197.2" width="60" height="2.3" fill="#f6f6f6" stroke="#666" stroke-width="0.5"/><rect x="306" y="197" width="37" height="3" fill="#f2f2f2" stroke="#777" stroke-width="0.5"/><rect x="300.3" y="200.8" width="3" height="31.5" fill="#fff" stroke="#111" stroke-width="0.9"/><rect x="300.3" y="286.5" width="3" height="30.8" fill="#fff" stroke="#111" stroke-width="0.9"/><rect x="470.8" y="215" width="2.2" height="18.5" fill="#fff" stroke="#555" stroke-width="0.7"/><rect x="470.8" y="287" width="2.2" height="23" fill="#fff" stroke="#555" stroke-width="0.7"/><rect x="342.5" y="322.2" width="18.8" height="3.8" fill="#e8e8e8" stroke="#555" stroke-width="0.8"/><rect x="414" y="319.8" width="10" height="2.5" fill="#c8c8c8" stroke="#777" stroke-width="0.6"/><rect x="306" y="320" width="36" height="2" fill="#d0d0d0"/><rect x="306" y="200" width="36.6" height="14" fill="#dedede" stroke="#555" stroke-width="0.8"/><rect x="343.3" y="198.3" width="19.5" height="8" fill="#dedede" stroke="#555" stroke-width="0.8"/><path d="M307 205 L313 205" stroke="#222" stroke-width="1"/><circle cx="313.5" cy="205" r="1.4" fill="none" stroke="#333" stroke-width="0.6"/><ellipse cx="320.5" cy="210.5" rx="4.6" ry="4.2" fill="#eee" stroke="#444" stroke-width="0.6"/><rect x="316.5" y="214.5" width="8" height="3" rx="1.2" fill="#e8e8e8" stroke="#666" stroke-width="0.5"/><circle cx="317" cy="204.5" r="1.6" fill="none" stroke="#444" stroke-width="0.6"/><rect x="322.5" y="201.5" width="1.2" height="1.4" fill="#111"/><rect x="330.5" y="201" width="8" height="2.6" fill="#f6f6f6" stroke="#222" stroke-width="0.7"/><rect x="372" y="217.2" width="14" height="33.6" fill="#dedede" stroke="#555" stroke-width="0.8"/><rect x="318.3" y="246.5" width="18" height="11.4" fill="#dedede" stroke="#555" stroke-width="0.8"/><path d="M325.6 246.5 L325.6 257.9" stroke="#555" stroke-width="0.7"/><rect x="306.2" y="294.5" width="47" height="23.3" fill="#dedede" stroke="#555" stroke-width="0.8"/><rect x="306.5" y="295" width="12" height="22.5" fill="#f0f0f0" stroke="#777" stroke-width="0.5"/><rect x="318.5" y="295" width="5.5" height="22.5" fill="#e6e6e6" stroke="#777" stroke-width="0.5"/><rect x="308.5" y="301.5" width="4.5" height="10" fill="#fff" stroke="#111" stroke-width="0.9"/><rect x="318.8" y="303" width="3.5" height="8" fill="#fff" stroke="#333" stroke-width="0.6"/><path d="M306.9 227.5 L306.9 291" stroke="#666" stroke-width="1.3" stroke-dasharray="1.5 1"/><path d="M306 317.8 L345 317.8" stroke="#666" stroke-width="0.8" stroke-dasharray="1.2 0.8"/><rect x="376" y="281.4" width="9.7" height="37.4" fill="#dedede" stroke="#555" stroke-width="0.8"/><rect x="372.6" y="288.6" width="3.4" height="22.6" fill="#f0ebe4" stroke="#555" stroke-width="0.6"/><rect x="373.2" y="289" width="4.2" height="6" fill="#9a9a9a" stroke="#333" stroke-width="0.6"/><path d="M374.8 298 L378.5 298 Q383.8 298.5 383.8 304 Q383.8 309.5 378.5 310 L374.8 310 Z" fill="#eee" stroke="#444" stroke-width="0.7"/><rect x="376.4" y="275.5" width="7.5" height="2" fill="#f4f4f4" stroke="#333" stroke-width="0.6"/><path d="M367 259 L408 259" stroke="#5cbf5c" stroke-width="1.2"/><path d="M370.5 259.5 Q372 271.5 385 275.5" fill="none" stroke="#444" stroke-width="0.6"/><path d="M370.5 259 L388 259" stroke="#2d6a2d" stroke-width="1.4"/><path d="M389.5 195.5 Q391 181 406 179.3 L406 195.5" fill="none" stroke="#444" stroke-width="0.7"/><path d="M406.3 179 L406.3 195.5" stroke="#222" stroke-width="1.1"/><path d="M410 262.6 Q424 264 427 279" fill="none" stroke="#444" stroke-width="0.6"/><rect x="449" y="200" width="20" height="41.2" fill="#dedede" stroke="#555" stroke-width="0.8"/><path d="M449 241.2 L469 241.2" stroke="#222" stroke-width="1.4"/><rect x="438.8" y="201.2" width="9" height="7.2" fill="#f0f0f0" stroke="#555" stroke-width="0.7"/><circle cx="443.2" cy="204.8" r="1.9" fill="none" stroke="#222" stroke-width="0.8"/><path d="M409.5 237.3 L449 237.3" stroke="#e6d8c4" stroke-width="0.8"/><rect x="436.6" y="265.2" width="16.2" height="13.2" fill="#dedede" stroke="#555" stroke-width="0.8"/><rect x="452.8" y="265.2" width="16.3" height="13.2" fill="#dedede" stroke="#555" stroke-width="0.8"/><path d="M434.4 280 L434.4 320 M440.1 280 L440.1 320 M445.3 280 L445.3 320 M450.7 280 L450.7 320 M429 290.5 L455 290.5 M429 300.3 L455 300.3 M429 310.1 L455 310.1 M455.5 290 L455.5 310.5 M450.5 300.3 L466 284 M450.5 300.3 L469 296 M450.5 300.3 L469 306 M450.5 300.3 L461 319" stroke="#444" stroke-width="0.55" fill="none"/><circle cx="461" cy="318" r="1.3" fill="none" stroke="#222" stroke-width="0.6"/><circle cx="463.5" cy="318" r="1.3" fill="none" stroke="#222" stroke-width="0.6"/><path d="M432 310 L430 313 L432 316" fill="none" stroke="#444" stroke-width="0.5"/><text x="343.7" y="189.2" font-size="7.5" fill="#333" font-weight="normal" textLength="29.5" lengthAdjust="spacingAndGlyphs" >ﾊﾞﾙｺﾆｰ</text><text x="318.6" y="240.3" font-size="9.8" fill="#333" font-weight="normal" textLength="49.9" lengthAdjust="spacingAndGlyphs" >大介の部屋</text><text x="422.2" y="251.3" font-size="8" fill="#333" font-weight="normal" textLength="34.8" lengthAdjust="spacingAndGlyphs" >ｹﾞｽﾄﾙｰﾑ</text><text x="417" y="293.3" font-size="5.6" fill="#333" font-weight="normal" textLength="8.0" lengthAdjust="spacingAndGlyphs" >DN</text><text x="402" y="257.5" font-size="4.8" fill="#333" font-weight="normal" textLength="11.5" lengthAdjust="spacingAndGlyphs" >扉窓</text><text x="402.5" y="263.3" font-size="4.8" fill="#333" font-weight="normal" textLength="11.0" lengthAdjust="spacingAndGlyphs" >ﾀﾞﾎ</text><circle cx="132" cy="433" r="15.6" fill="none" stroke="#333" stroke-width="0.9"/><path d="M132.4 418.4 L126.9 448.9 L138.2 448.9 Z" fill="#000"/><path d="M129.5 448.3 L135.5 448.3" stroke="#aaa" stroke-width="0.8"/><path d="M131 417.7 L131 412.7 L134 417.7 L134 412.7" fill="none" stroke="#222" stroke-width="0.7"/>
<rect x="788" y="64" width="12" height="407.5" fill="#f5f3ec"/><rect x="798.5" y="51" width="1.5" height="431" fill="#e8e4d8"/><rect x="788" y="64.3" width="10.6" height="10.2" fill="#a6a28e"/><rect x="788" y="64.3" width="9.6" height="9.2" fill="#fbfaf4"/><rect x="788.8" y="65.1" width="8.799999999999999" height="8.399999999999999" fill="#ece9d9"/><path d="M790.8 71.2 L793.4 68.2 L796 71.2 Z" fill="#000"/><rect x="788" y="266.1" width="10.6" height="10.4" fill="#a6a28e"/><rect x="788" y="266.1" width="9.6" height="9.4" fill="#fbfaf4"/><rect x="788.8" y="266.90000000000003" width="8.799999999999999" height="8.6" fill="#ece9d9"/><rect x="788" y="461.2" width="10.6" height="10.3" fill="#a6a28e"/><rect x="788" y="461.2" width="9.6" height="9.3" fill="#fbfaf4"/><rect x="788.8" y="462.0" width="8.799999999999999" height="8.5" fill="#ece9d9"/><path d="M790.8 464.8 L793.4 467.8 L796 464.8 Z" fill="#000"/><rect x="94" y="471.5" width="706" height="10.5" fill="#f5f3ec"/><rect x="94" y="471.5" width="10.5" height="10.5" fill="#a6a28e"/><rect x="94" y="471.5" width="9.5" height="9.5" fill="#fbfaf4"/><rect x="94.8" y="472.3" width="8.7" height="8.7" fill="#ece9d9"/><path d="M100.6 474.2 L97.6 476.8 L100.6 479.4 Z" fill="#000"/><rect x="777.5" y="471.5" width="10.5" height="10.5" fill="#a6a28e"/><rect x="777.5" y="471.5" width="9.5" height="9.5" fill="#fbfaf4"/><rect x="778.3" y="472.3" width="8.7" height="8.7" fill="#ece9d9"/><path d="M781.4 474.2 L784.4 476.8 L781.4 479.4 Z" fill="#000"/><rect x="488" y="471.5" width="10.3" height="10.2" fill="#a6a28e"/><rect x="488" y="471.5" width="9.3" height="9.2" fill="#fbfaf4"/><rect x="488.8" y="472.3" width="8.5" height="8.399999999999999" fill="#ece9d9"/><rect x="788" y="471.5" width="12" height="10.5" fill="#ece9d8"/>
<rect x="0" y="482" width="800" height="71" fill="#ebe5d8"/><rect x="0" y="482" width="81.5" height="71" fill="#ece6da"/><rect x="81.2" y="482" width="1" height="71" fill="#b3ab9b"/><rect x="82.2" y="482" width="1" height="71" fill="#f6f2ea"/><rect x="2" y="484.8" width="76.6" height="9" fill="#d9d2bc"/><rect x="2" y="484.8" width="76.6" height="0.8" fill="#b2aa94"/><rect x="2" y="484.8" width="0.8" height="9" fill="#b2aa94"/><text x="29" y="493.1" font-size="7.8" fill="#3a3a3a" font-weight="normal" textLength="22.5" lengthAdjust="spacingAndGlyphs" >窓配置</text><text x="4.7" y="503.2" font-size="6.8" fill="#4a4a4a" font-weight="normal" textLength="71.1" lengthAdjust="spacingAndGlyphs" >最初に位置を、次に取り</text><text x="4.7" y="511.5" font-size="6.8" fill="#4a4a4a" font-weight="normal" textLength="71.1" lengthAdjust="spacingAndGlyphs" >付け方向を決定します。</text><rect x="8.3" y="519.5" width="7.2" height="7.2" fill="#fff" stroke="#8c8678" stroke-width="0.7"/><path d="M9.6 523 L11.3 524.9 L14.3 520.9" fill="none" stroke="#000" stroke-width="1.3"/><text x="19" y="526" font-size="7.2" fill="#4a4a4a" font-weight="normal" textLength="42.5" lengthAdjust="spacingAndGlyphs" >詳細ウィンドウ</text><rect x="7" y="532.2" width="31.6" height="14.8" fill="#a8a08c"/><rect x="7" y="532.2" width="30.6" height="13.8" fill="#f8f6ee"/><rect x="7.9" y="533.1" width="29.700000000000003" height="12.9" fill="#e8e2d2"/><rect x="42.7" y="532.2" width="31.8" height="14.8" fill="#a8a08c"/><rect x="42.7" y="532.2" width="30.8" height="13.8" fill="#f8f6ee"/><rect x="43.6" y="533.1" width="29.900000000000002" height="12.9" fill="#e8e2d2"/><text x="17.5" y="542.7" font-size="6.2" fill="#555" font-weight="normal" textLength="11.5" lengthAdjust="spacingAndGlyphs" >検索</text><text x="45.5" y="542.7" font-size="6.2" fill="#555" font-weight="normal" textLength="26.3" lengthAdjust="spacingAndGlyphs" >ダウンロード</text><rect x="624" y="482" width="175" height="14.8" fill="#766549"/><rect x="83" y="496.6" width="716" height="1" fill="#f7f3ea"/><defs><linearGradient id="gTab" x1="0" y1="0" x2="0" y2="1"><stop offset="0" stop-color="#ebe4d5"/><stop offset="1" stop-color="#d9d0bc"/></linearGradient></defs><rect x="82.8" y="482.4" width="44.7" height="14.2" fill="url(#gTab)"/><rect x="82.8" y="482.4" width="0.9" height="14.2" fill="#fbf8f0"/><rect x="126.6" y="482.4" width="0.9" height="14.2" fill="#a69e8a"/><text x="87" y="493.8" font-size="7.6" fill="#222" font-weight="normal" textLength="34.5" lengthAdjust="spacingAndGlyphs" stroke="#222" stroke-width="0.15">お気に入り</text><rect x="127.5" y="482.4" width="25.30000000000001" height="14.2" fill="url(#gTab)"/><rect x="127.5" y="482.4" width="0.9" height="14.2" fill="#fbf8f0"/><rect x="151.9" y="482.4" width="0.9" height="14.2" fill="#a69e8a"/><text x="131.9" y="493.8" font-size="7.6" fill="#222" font-weight="normal" textLength="14.7" lengthAdjust="spacingAndGlyphs" stroke="#222" stroke-width="0.15">履歴</text><rect x="223.75" y="482.4" width="69.85000000000002" height="14.2" fill="url(#gTab)"/><rect x="223.75" y="482.4" width="0.9" height="14.2" fill="#fbf8f0"/><rect x="292.70000000000005" y="482.4" width="0.9" height="14.2" fill="#a69e8a"/><text x="228" y="493.8" font-size="7.6" fill="#222" font-weight="normal" textLength="60.5" lengthAdjust="spacingAndGlyphs" stroke="#222" stroke-width="0.15">操出し窓(引違4枚)</text><rect x="293.6" y="482.4" width="57.39999999999998" height="14.2" fill="url(#gTab)"/><rect x="293.6" y="482.4" width="0.9" height="14.2" fill="#fbf8f0"/><rect x="350.1" y="482.4" width="0.9" height="14.2" fill="#a69e8a"/><text x="297" y="493.8" font-size="7.6" fill="#222" font-weight="normal" textLength="48.5" lengthAdjust="spacingAndGlyphs" stroke="#222" stroke-width="0.15">腰窓(引違2枚)</text><rect x="351" y="482.4" width="56" height="14.2" fill="url(#gTab)"/><rect x="351" y="482.4" width="0.9" height="14.2" fill="#fbf8f0"/><rect x="406.1" y="482.4" width="0.9" height="14.2" fill="#a69e8a"/><text x="355" y="493.8" font-size="7.6" fill="#222" font-weight="normal" textLength="46.5" lengthAdjust="spacingAndGlyphs" stroke="#222" stroke-width="0.15">腰窓(引違4枚)</text><rect x="407" y="482.4" width="88.60000000000002" height="14.2" fill="url(#gTab)"/><rect x="407" y="482.4" width="0.9" height="14.2" fill="#fbf8f0"/><rect x="494.70000000000005" y="482.4" width="0.9" height="14.2" fill="#a69e8a"/><text x="412" y="493.8" font-size="7.6" fill="#222" font-weight="normal" textLength="78.5" lengthAdjust="spacingAndGlyphs" stroke="#222" stroke-width="0.15">操出し窓・腰窓(引違3枚)</text><rect x="495.6" y="482.4" width="28.399999999999977" height="14.2" fill="url(#gTab)"/><rect x="495.6" y="482.4" width="0.9" height="14.2" fill="#fbf8f0"/><rect x="523.1" y="482.4" width="0.9" height="14.2" fill="#a69e8a"/><text x="500" y="493.8" font-size="7.6" fill="#222" font-weight="normal" textLength="18.5" lengthAdjust="spacingAndGlyphs" stroke="#222" stroke-width="0.15">FIX窓</text><rect x="524" y="482.4" width="25.399999999999977" height="14.2" fill="url(#gTab)"/><rect x="524" y="482.4" width="0.9" height="14.2" fill="#fbf8f0"/><rect x="548.5" y="482.4" width="0.9" height="14.2" fill="#a69e8a"/><text x="528" y="493.8" font-size="7.6" fill="#222" font-weight="normal" textLength="15.5" lengthAdjust="spacingAndGlyphs" stroke="#222" stroke-width="0.15">出窓</text><rect x="549.4" y="482.4" width="40.60000000000002" height="14.2" fill="url(#gTab)"/><rect x="549.4" y="482.4" width="0.9" height="14.2" fill="#fbf8f0"/><rect x="589.1" y="482.4" width="0.9" height="14.2" fill="#a69e8a"/><text x="553" y="493.8" font-size="7.6" fill="#222" font-weight="normal" textLength="31.5" lengthAdjust="spacingAndGlyphs" stroke="#222" stroke-width="0.15">縦スベリ窓</text><rect x="590" y="482.4" width="34" height="14.2" fill="url(#gTab)"/><rect x="590" y="482.4" width="0.9" height="14.2" fill="#fbf8f0"/><rect x="623.1" y="482.4" width="0.9" height="14.2" fill="#a69e8a"/><text x="595" y="493.8" font-size="7.6" fill="#222" font-weight="normal" textLength="22.5" lengthAdjust="spacingAndGlyphs" stroke="#222" stroke-width="0.15">装飾窓</text><rect x="152.8" y="482" width="71" height="15.6" fill="#f1ede4"/><rect x="152.8" y="482" width="0.9" height="15" fill="#fffdf8"/><rect x="222.9" y="482" width="0.9" height="15" fill="#a69e8a"/><text x="158" y="493.9" font-size="7.8" fill="#000" font-weight="bold" textLength="60.5" lengthAdjust="spacingAndGlyphs" stroke="#000" stroke-width="0.3">操出し窓(引違2枚)</text>
<text x="91.05" y="505.6" font-size="6.6" fill="#222" font-weight="normal" textLength="36.7" lengthAdjust="spacingAndGlyphs" stroke="#222" stroke-width="0.15">SN操窓G01</text><text x="91.05" y="547.8" font-size="6.6" fill="#222" font-weight="normal" textLength="41.7" lengthAdjust="spacingAndGlyphs" stroke="#222" stroke-width="0.15">W1690 H1818</text><rect x="90.75" y="507.1" width="53.3" height="33.7" fill="#0a7fc6"/><text x="155.3" y="505.6" font-size="6.6" fill="#222" font-weight="normal" textLength="36.7" lengthAdjust="spacingAndGlyphs" stroke="#222" stroke-width="0.15">SN操窓G02</text><text x="155.3" y="547.8" font-size="6.6" fill="#222" font-weight="normal" textLength="41.7" lengthAdjust="spacingAndGlyphs" stroke="#222" stroke-width="0.15">W2600 H2030</text><rect x="155" y="507.1" width="53.3" height="33.7" fill="#0a7fc6"/><text x="218.9" y="505.6" font-size="6.6" fill="#222" font-weight="normal" textLength="36.7" lengthAdjust="spacingAndGlyphs" stroke="#222" stroke-width="0.15">SN操窓G04</text><text x="218.9" y="547.8" font-size="6.6" fill="#222" font-weight="normal" textLength="41.7" lengthAdjust="spacingAndGlyphs" stroke="#222" stroke-width="0.15">W1690 H1818</text><rect x="218.6" y="507.1" width="53.3" height="33.7" fill="#0a7fc6"/><text x="282.5" y="505.6" font-size="6.6" fill="#222" font-weight="normal" textLength="36.7" lengthAdjust="spacingAndGlyphs" stroke="#222" stroke-width="0.15">SNｼｬｯﾀｰH01</text><text x="282.5" y="547.8" font-size="6.6" fill="#222" font-weight="normal" textLength="41.7" lengthAdjust="spacingAndGlyphs" stroke="#222" stroke-width="0.15">W2600 H2241</text><rect x="282.2" y="507.1" width="53.3" height="33.7" fill="#0a7fc6"/><text x="346.3" y="505.6" font-size="6.6" fill="#222" font-weight="normal" textLength="36.7" lengthAdjust="spacingAndGlyphs" stroke="#222" stroke-width="0.15">YA操窓H03</text><text x="346.3" y="547.8" font-size="6.6" fill="#222" font-weight="normal" textLength="41.7" lengthAdjust="spacingAndGlyphs" stroke="#222" stroke-width="0.15">W1690 H2030</text><rect x="346" y="507.1" width="53.3" height="33.7" fill="#0a7fc6"/><text x="410.6" y="505.6" font-size="6.6" fill="#222" font-weight="normal" textLength="36.7" lengthAdjust="spacingAndGlyphs" stroke="#222" stroke-width="0.15">YA操窓H04</text><text x="410.6" y="547.8" font-size="6.6" fill="#222" font-weight="normal" textLength="41.7" lengthAdjust="spacingAndGlyphs" stroke="#222" stroke-width="0.15">W1690 H2030</text><rect x="410.3" y="507.1" width="53.3" height="33.7" fill="#0a7fc6"/><text x="474.5" y="505.6" font-size="6.6" fill="#222" font-weight="normal" textLength="36.7" lengthAdjust="spacingAndGlyphs" stroke="#222" stroke-width="0.15">YA操窓H05</text><text x="474.5" y="547.8" font-size="6.6" fill="#222" font-weight="normal" textLength="41.7" lengthAdjust="spacingAndGlyphs" stroke="#222" stroke-width="0.15">W1690 H2030</text><rect x="474.2" y="507.1" width="53.3" height="33.7" fill="#0a7fc6"/><text x="538.4" y="505.6" font-size="6.6" fill="#222" font-weight="normal" textLength="36.7" lengthAdjust="spacingAndGlyphs" stroke="#222" stroke-width="0.15">YA操窓H06</text><text x="538.4" y="547.8" font-size="6.6" fill="#222" font-weight="normal" textLength="41.7" lengthAdjust="spacingAndGlyphs" stroke="#222" stroke-width="0.15">W1690 H2030</text><rect x="538.1" y="507.1" width="53.3" height="33.7" fill="#0a7fc6"/><text x="602.0999999999999" y="505.6" font-size="6.6" fill="#222" font-weight="normal" textLength="36.7" lengthAdjust="spacingAndGlyphs" stroke="#222" stroke-width="0.15">YA操窓H07</text><text x="602.0999999999999" y="547.8" font-size="6.6" fill="#222" font-weight="normal" textLength="41.7" lengthAdjust="spacingAndGlyphs" stroke="#222" stroke-width="0.15">W1690 H2030</text><rect x="601.8" y="507.1" width="53.3" height="33.7" fill="#0a7fc6"/><text x="666.0" y="505.6" font-size="6.6" fill="#222" font-weight="normal" textLength="36.7" lengthAdjust="spacingAndGlyphs" stroke="#222" stroke-width="0.15">YA操窓H08</text><text x="666.0" y="547.8" font-size="6.6" fill="#222" font-weight="normal" textLength="41.7" lengthAdjust="spacingAndGlyphs" stroke="#222" stroke-width="0.15">W1690 H2030</text><rect x="665.7" y="507.1" width="53.3" height="33.7" fill="#0a7fc6"/><text x="729.5999999999999" y="505.6" font-size="6.6" fill="#222" font-weight="normal" textLength="36.7" lengthAdjust="spacingAndGlyphs" stroke="#222" stroke-width="0.15">操2BK6060</text><text x="729.5999999999999" y="547.8" font-size="6.6" fill="#222" font-weight="normal" textLength="41.7" lengthAdjust="spacingAndGlyphs" stroke="#222" stroke-width="0.15">W1710 H1860</text><rect x="729.3" y="507.1" width="53.3" height="33.7" fill="#0a7fc6"/><rect x="106" y="510.2" width="25.599999999999994" height="27.400000000000034" fill="#3597d2" stroke="#a6d4ee" stroke-width="1"/><path d="M118.4 510.2 L118.4 537.6" stroke="#a6d4ee" stroke-width="0.9"/><rect x="106" y="535.8" width="25.6" height="2" fill="#d8eef8"/><rect x="163.6" y="509" width="36.400000000000006" height="28.600000000000023" fill="#3597d2" stroke="#a6d4ee" stroke-width="1"/><path d="M181.7 509 L181.7 537.6" stroke="#a6d4ee" stroke-width="0.9"/><rect x="163.6" y="535.8" width="36.4" height="2" fill="#d8eef8"/><rect x="231.5" y="509.8" width="26.30000000000001" height="27.80000000000001" fill="#3597d2" stroke="#a6d4ee" stroke-width="1"/><rect x="231.5" y="535.6" width="26.3" height="2.2" fill="#d8eef8"/><rect x="290.8" y="509.2" width="35.39999999999998" height="29.19999999999999" fill="#3597d2" stroke="#a6d4ee" stroke-width="1"/><path d="M308.2 509.2 L308.2 538.4" stroke="#a6d4ee" stroke-width="0.9"/><rect x="291.2" y="509.6" width="34.6" height="3.6" fill="#a9c6da"/><rect x="362.3" y="509.6" width="23.099999999999966" height="29.600000000000023" fill="#3597d2" stroke="#2d5776" stroke-width="1.3"/><path d="M368.6 509.6 L368.6 539.2 M379.6 509.6 L379.6 539.2 M362.3 515.9 L385.4 515.9 M362.3 521.6 L385.4 521.6 M362.3 527.3 L385.4 527.3 M362.3 532.8 L385.4 532.8 " stroke="#2d5776" stroke-width="0.6"/><path d="M374.2 509.6 L374.2 539.2" stroke="#2d5776" stroke-width="1.1700000000000002"/><rect x="425" y="509.6" width="24.69999999999999" height="29.600000000000023" fill="#3597d2" stroke="#2d5776" stroke-width="1.4"/><path d="M425 524.2 L449.7 524.2 " stroke="#2d5776" stroke-width="0.6"/><path d="M437.4 509.6 L437.4 539.2" stroke="#2d5776" stroke-width="1.26"/><rect x="490.5" y="509.6" width="24.0" height="29.600000000000023" fill="#3597d2" stroke="#2d5776" stroke-width="1.4"/><path d="M490.5 522.4 L514.5 522.4 M490.5 530.5 L514.5 530.5 " stroke="#3a6d92" stroke-width="0.6"/><path d="M502.5 509.6 L502.5 539.2" stroke="#2d5776" stroke-width="1.26"/><rect x="553.4" y="509.2" width="25.0" height="29.400000000000034" fill="#3597d2" stroke="#a6d4ee" stroke-width="1"/><path d="M560.2 509.2 L560.2 538.6 M572.8 509.2 L572.8 538.6 M553.4 515.9 L578.4 515.9 M553.4 521.6 L578.4 521.6 M553.4 527.3 L578.4 527.3 M553.4 533 L578.4 533 " stroke="#8cc8ea" stroke-width="0.6"/><path d="M566.4 509.2 L566.4 538.6" stroke="#a6d4ee" stroke-width="0.9"/><rect x="617" y="509.2" width="24.799999999999955" height="29.19999999999999" fill="#3597d2" stroke="#a6d4ee" stroke-width="1"/><path d="M617 523.2 L641.8 523.2 " stroke="#a8d8f0" stroke-width="0.6"/><path d="M629.6 509.2 L629.6 538.4" stroke="#a6d4ee" stroke-width="0.9"/><rect x="617" y="536.4" width="24.8" height="2" fill="#cfeaf8"/><rect x="681" y="509.2" width="24.600000000000023" height="29.19999999999999" fill="#3597d2" stroke="#a6d4ee" stroke-width="1"/><path d="M681 515.9 L705.6 515.9 M681 532.1 L705.6 532.1 " stroke="#a8d8f0" stroke-width="0.6"/><path d="M693.4 509.2 L693.4 538.4" stroke="#a6d4ee" stroke-width="0.9"/><rect x="681" y="536.4" width="24.6" height="2" fill="#cfeaf8"/><rect x="745.6" y="509.6" width="24.799999999999955" height="28.0" fill="#3597d2" stroke="#101820" stroke-width="1.4"/><path d="M757.8 509.6 L757.8 537.6" stroke="#101820" stroke-width="1.26"/><rect x="745.2" y="535.3" width="25.6" height="2.6" fill="#101820"/><rect x="788" y="497.6" width="11" height="53" fill="#f4f2ea"/><rect x="788.1" y="499.2" width="10.2" height="9" fill="#a6a28e"/><rect x="788.1" y="499.2" width="9.2" height="8" fill="#fbfaf4"/><rect x="788.9" y="500.0" width="8.399999999999999" height="7.2" fill="#ece9d9"/><path d="M791 505.6 L793.3 502.9 L795.6 505.6 Z" fill="#000"/><rect x="788.1" y="509.3" width="10.2" height="9.9" fill="#a6a28e"/><rect x="788.1" y="509.3" width="9.2" height="8.9" fill="#fbfaf4"/><rect x="788.9" y="510.1" width="8.399999999999999" height="8.1" fill="#ece9d9"/><rect x="788.1" y="540.2" width="10.2" height="9.4" fill="#a6a28e"/><rect x="788.1" y="540.2" width="9.2" height="8.4" fill="#fbfaf4"/><rect x="788.9" y="541.0" width="8.399999999999999" height="7.6000000000000005" fill="#ece9d9"/><path d="M791 543.6 L793.3 546.3 L795.6 543.6 Z" fill="#000"/><rect x="0" y="550.5" width="800" height="2.5" fill="#e4ddcd"/><rect x="0" y="550.5" width="800" height="0.8" fill="#f6f2ea"/>
</svg></body></html>
